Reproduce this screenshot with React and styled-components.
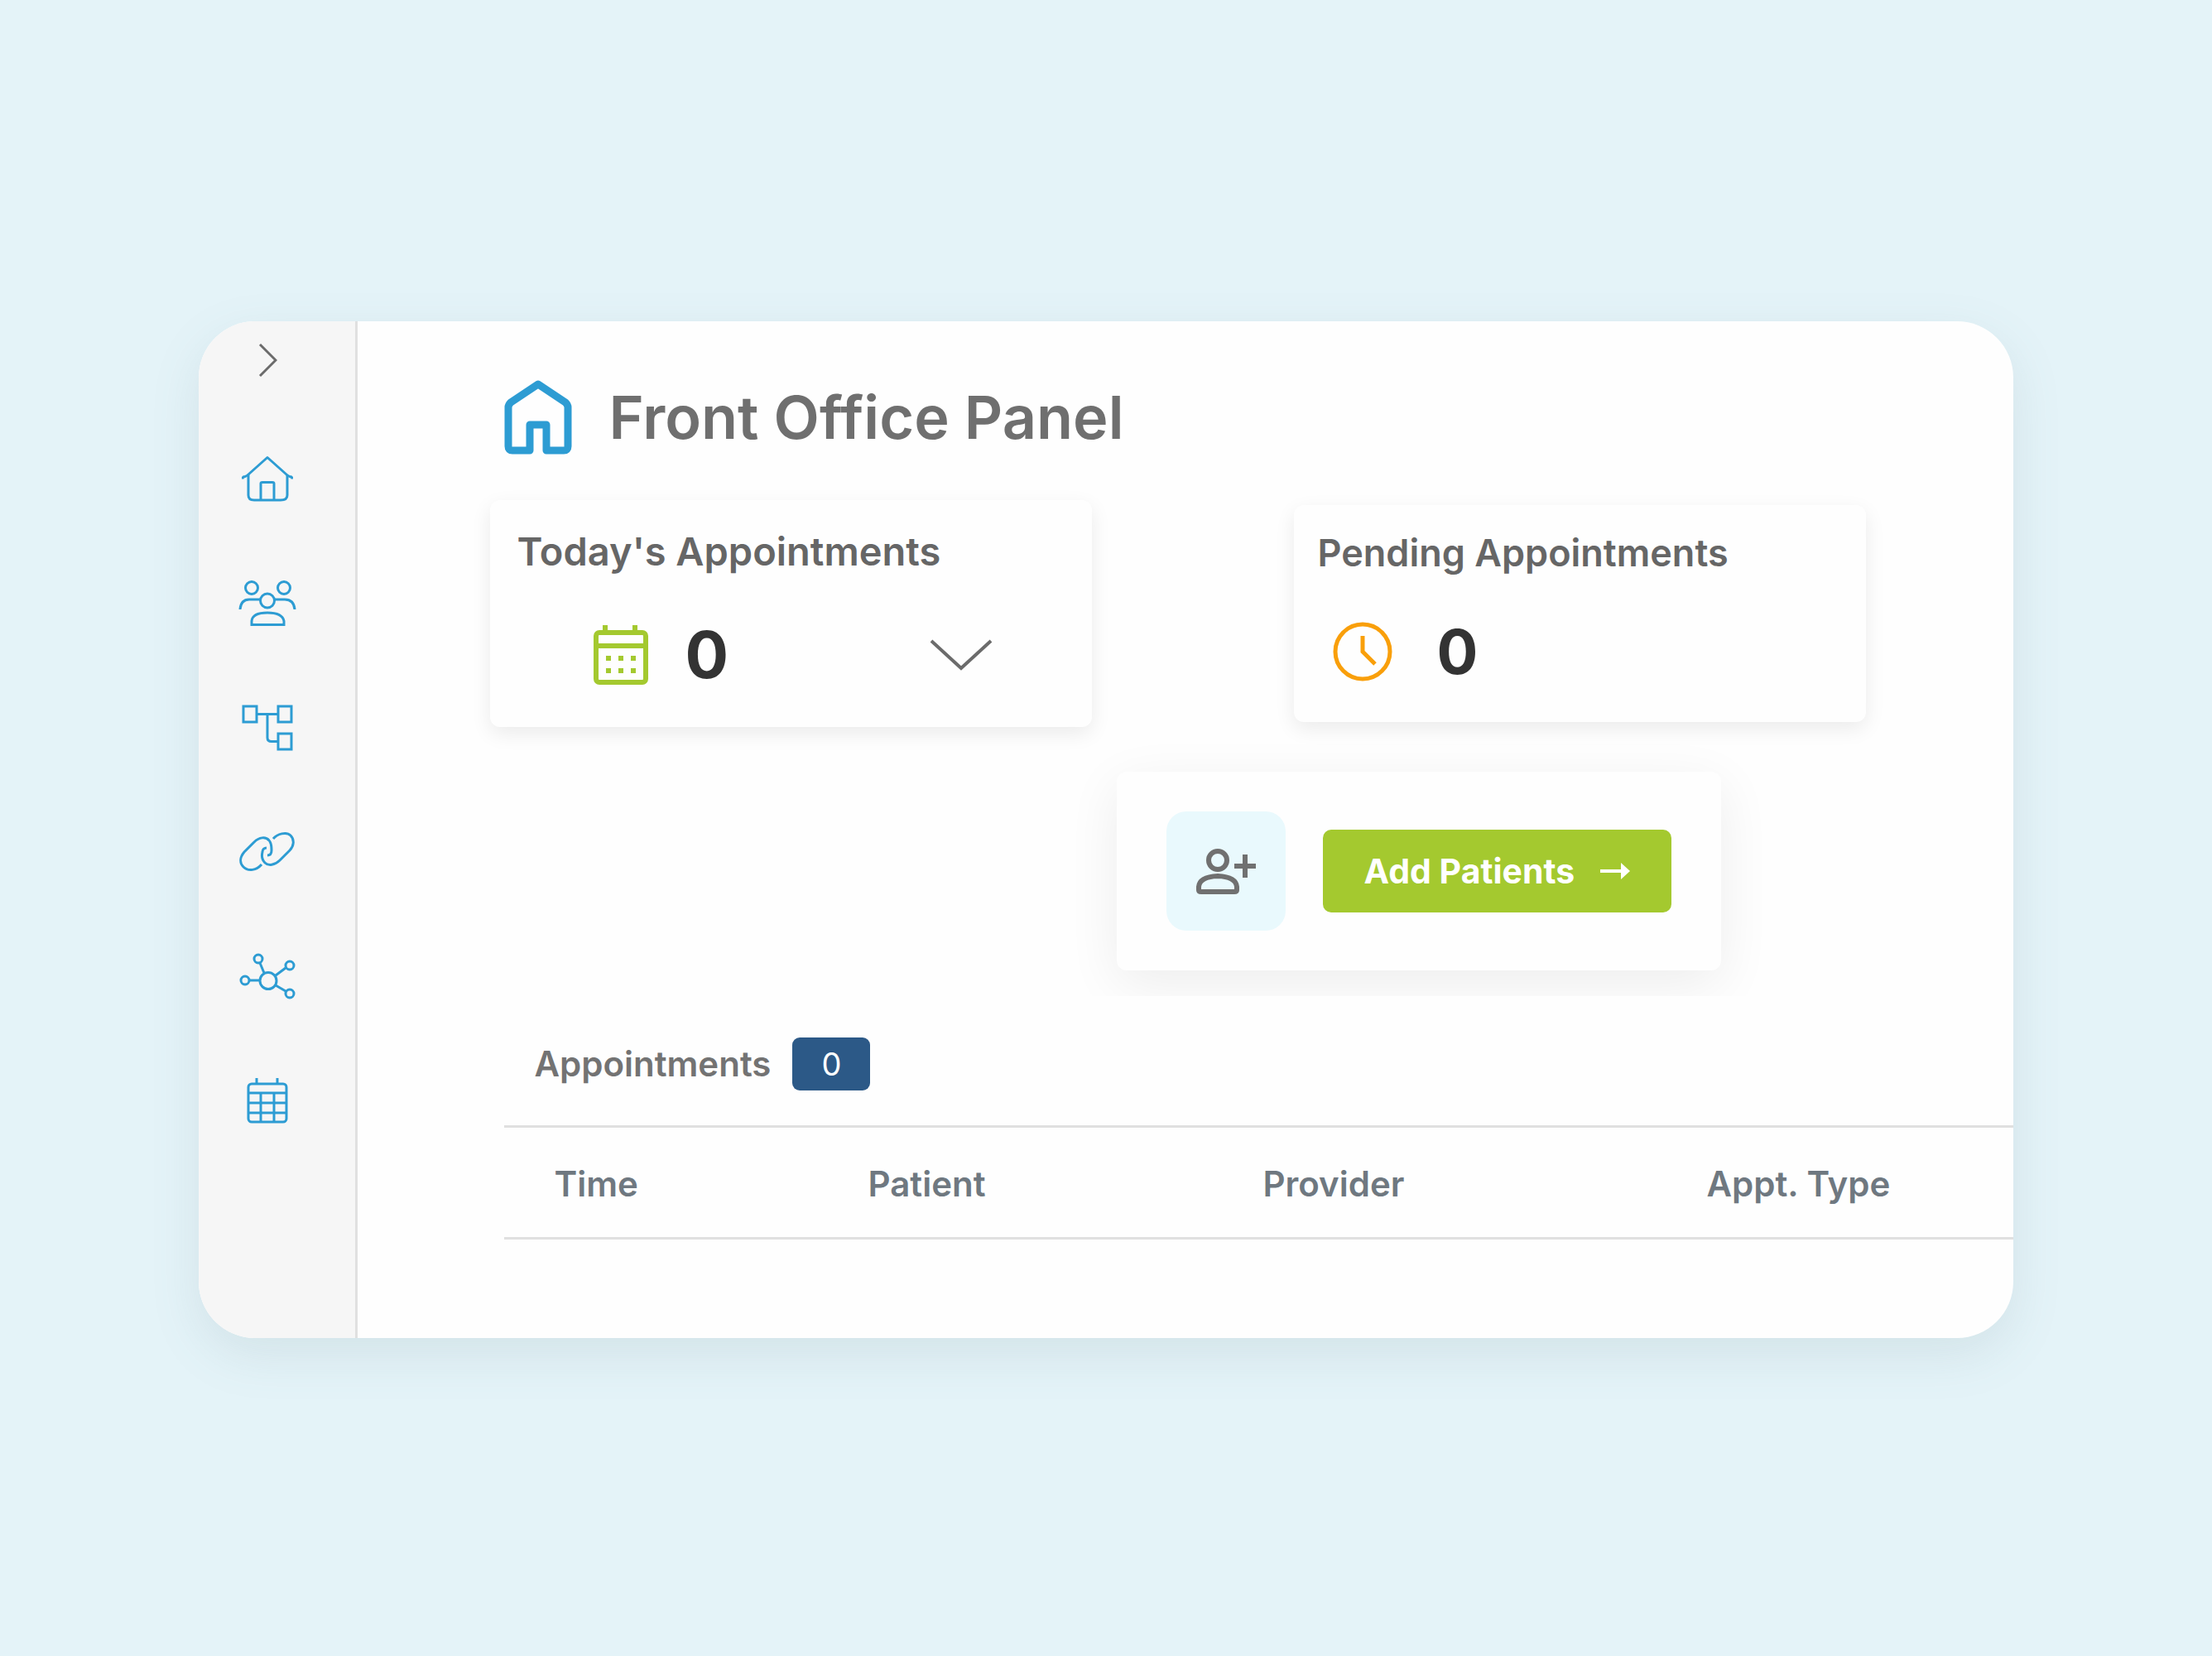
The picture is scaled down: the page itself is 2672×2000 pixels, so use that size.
import React from "react";
import styled, { createGlobalStyle } from "styled-components";

const GlobalStyle = createGlobalStyle`
    * {
        box-sizing: border-box;
    }

    body {
        margin: 0;
        background-color: #e4f3f8;
        font-family: Inter, "Liberation Sans", sans-serif;
    }
`;

const Page = styled.div`
    min-height: 100vh;
    padding: 4px 9% 0;
    display: flex;
    align-items: center;
`;

const Panel = styled.div`
    flex: 1;
    min-width: 0;
    display: flex;
    background-color: #fefefe;
    border-radius: 68px;
    overflow: hidden;
    box-shadow: 0 20px 60px rgba(90, 120, 130, 0.13);
`;

const Sidebar = styled.nav`
    flex: none;
    width: 192px;
    padding: 16px 24px 0 0;
    display: flex;
    flex-direction: column;
    align-items: center;
    background-color: #f6f6f6;
    border-right: 3px solid #e0e0e0;
`;

const ExpandBtn = styled.button`
    display: flex;
    margin-bottom: 84px;
    padding: 0;
    border: none;
    background: none;
    color: #6b6b6b;
    cursor: pointer;
`;

const NavLink = styled.a`
    display: flex;
    color: #2d9cd3;

    & + & {
        margin-top: 92px;
    }
`;

const Content = styled.main`
    flex: 1;
    min-width: 0;
    padding: 64px 0 119px 160px;
`;

const TitleRow = styled.header`
    display: flex;
    align-items: center;
    gap: 44px;
    padding-left: 17px;
    color: #2d9cd3;
`;

const Title = styled.h1`
    margin: 0;
    font-size: 72px;
    line-height: 104px;
    font-weight: 600;
    color: #6f6f6f;
`;

const Cards = styled.div`
    display: flex;
    align-items: center;
    justify-content: space-between;
    margin: 48px 178px 54px 0;
`;

const Card = styled.section`
    width: ${(props) => (props.$compact ? "691px" : "727px")};
    padding: ${(props) => (props.$compact ? "24px 29px 41px" : "28px 32px 43px")};
    border-radius: 12px;
    background-color: #fefefe;
    box-shadow: 0 8px 24px rgba(0, 0, 0, 0.08);
`;

const CardTitle = styled.h2`
    margin: 0;
    font-size: ${(props) => (props.$compact ? "45px" : "47px")};
    line-height: 68px;
    font-weight: 600;
    color: #666666;
`;

const CardBody = styled.div`
    display: flex;
    align-items: center;
    gap: ${(props) => (props.$compact ? "52px" : "41px")};
    margin-top: ${(props) => (props.$compact ? "41px" : "47px")};
    padding: ${(props) => (props.$compact ? "0 16px" : "0 88px 0 90px")};
    color: ${(props) => props.$color};
`;

const Count = styled.span`
    font-size: ${(props) => (props.$compact ? "74px" : "78px")};
    line-height: 88px;
    font-weight: 700;
    color: #333333;
`;

const ToggleBtn = styled.button`
    display: flex;
    margin-left: auto;
    padding: 0;
    border: none;
    background: none;
    color: #6b6b6b;
    cursor: pointer;
`;

const AddClip = styled.div`
    display: flex;
    justify-content: flex-end;
    margin-top: -40px;
    padding: 40px 353px 31px 0;
    overflow: hidden;
`;

const AddCard = styled.section`
    display: flex;
    align-items: center;
    gap: 45px;
    padding: 48px 60px;
    border-radius: 12px;
    background-color: #fefefe;
    box-shadow: 0 16px 64px rgba(0, 0, 0, 0.07);
`;

const AddIconBox = styled.div`
    display: flex;
    align-items: center;
    justify-content: center;
    width: 144px;
    height: 144px;
    border-radius: 24px;
    background-color: #e9f9fd;
    color: #707070;
`;

const AddBtn = styled.button`
    display: flex;
    align-items: center;
    justify-content: space-between;
    width: 421px;
    height: 100px;
    padding: 0 50px;
    border: none;
    border-radius: 10px;
    background-color: #a4c92f;
    color: #ffffff;
    font-family: inherit;
    font-size: 41px;
    font-weight: 700;
    cursor: pointer;
`;

const ListHeader = styled.div`
    display: flex;
    align-items: center;
    gap: 26px;
    margin: 50px 0 42px 53px;
`;

const ListTitle = styled.h2`
    margin: 0;
    font-size: 42px;
    line-height: 64px;
    font-weight: 600;
    color: #737373;
`;

const Badge = styled.span`
    width: 94px;
    border-radius: 9px;
    background-color: #2c5987;
    color: #ffffff;
    font-size: 38px;
    line-height: 64px;
    text-align: center;
`;

const TableWrap = styled.div`
    padding-left: 17px;
`;

const Table = styled.table`
    width: 100%;
    table-layout: fixed;
    border-collapse: collapse;
    border-top: 3px solid #e0e0e0;
    border-bottom: 3px solid #e0e0e0;
`;

const HeadCell = styled.th`
    width: ${(props) => props.$width};
    padding: 4px 0 0 60px;
    text-align: left;
    font-size: 42px;
    line-height: 128px;
    font-weight: 600;
    color: #6f7880;
`;

const HomeIcon = () => (
    <svg width="62" height="58" viewBox="0 0 62 58" fill="none" stroke="currentColor" strokeWidth="3" strokeLinejoin="round">
        <path d="M1 28.500Q1 25.500 4 25.500Q6 25 8 23L31 2.500L54 23Q56 25 58 25.500Q61 25.500 61 28.500" />
        <path d="M8 23V48Q8 54 15 54H47Q55 54 55 48V23" />
        <path d="M23 54V34Q23 32.500 25 32.500H37Q39 32.500 39 34V54" />
    </svg>
);

const PeopleIcon = () => (
    <svg width="70" height="58" viewBox="0 0 70 58" fill="none" stroke="currentColor" strokeWidth="3">
        <circle cx="16" cy="10" r="7.500" />
        <circle cx="55" cy="10" r="7.500" />
        <circle cx="35" cy="25.500" r="8.500" />
        <path d="M2 36Q3 24 13 24H26M44 24H56Q67 24 68 36" />
        <path d="M16 54.500V50Q17 40 35 40Q53 40 55 50V54.500Z" />
    </svg>
);

const FlowIcon = () => (
    <svg width="62" height="58" viewBox="0 0 62 58" fill="none" stroke="currentColor" strokeWidth="3">
        <rect x="2" y="3" width="16" height="19" />
        <rect x="44" y="3" width="16" height="19" />
        <rect x="44" y="36" width="16" height="19" />
        <path d="M18 12.500H44M31 12.500V41Q31 45.500 36 45.500H44" />
    </svg>
);

const LinkIcon = () => (
    <svg width="68" height="58" viewBox="0 0 68 58" fill="none" stroke="currentColor" strokeWidth="3">
        <path d="M41 13C46 7 57 4 62 9C67 14 66 22 61 27L49 39C43 45 35 46 31 42C27 38 27 33 28 29C28 26 30 24 33 24" />
        <path d="M27 44C21 51 11 53 5 47C0 42 1 35 6 29L18 17C24 11 32 10 36 15C39 18 39 24 39 27C39 31 37 33 34 33" />
    </svg>
);

const NetworkIcon = () => (
    <svg width="70" height="58" viewBox="0 0 70 58" fill="none" stroke="currentColor" strokeWidth="3">
        <circle cx="36" cy="34.500" r="10" />
        <circle cx="24" cy="8" r="5" />
        <circle cx="62" cy="16" r="5" />
        <circle cx="62" cy="50" r="5" />
        <circle cx="8" cy="34" r="5" />
        <path d="M26 13L31 25M57 19L45 28M57 47L45 40M13 34H26" />
    </svg>
);

const CalendarIcon = () => (
    <svg width="50" height="58" viewBox="0 0 50 58" fill="none" stroke="currentColor" strokeWidth="3">
        <rect x="2" y="9" width="46" height="46" rx="4" />
        <path d="M12 2V9M37 2V9M2 20H48M2 32H48M2 44H48M17 20V55M33 20V55" />
    </svg>
);

const NAV_ITEMS = [
    { label: "Home", Icon: HomeIcon },
    { label: "Patients", Icon: PeopleIcon },
    { label: "Workflow", Icon: FlowIcon },
    { label: "Links", Icon: LinkIcon },
    { label: "Network", Icon: NetworkIcon },
    { label: "Calendar", Icon: CalendarIcon },
];

const COLUMNS = [
    { label: "Time", width: "379px" },
    { label: "Patient", width: "477px" },
    { label: "Provider", width: "536px" },
    { label: "Appt. Type", width: "auto" },
];

const App = () => {
    return (
        <Page>
            <GlobalStyle />
            <Panel>
                <Sidebar>
                    <ExpandBtn aria-label="Expand menu">
                        <svg width="24" height="62" viewBox="0 0 24 62" fill="none" stroke="currentColor" strokeWidth="3">
                            <path d="M3 12L22 31L3 50" />
                        </svg>
                    </ExpandBtn>
                    {NAV_ITEMS.map(({ label, Icon }) => (
                        <NavLink key={label} href="#" aria-label={label}>
                            <Icon />
                        </NavLink>
                    ))}
                </Sidebar>

                <Content>
                    <TitleRow>
                        <svg width="82" height="92" viewBox="0 0 82 92" fill="none" stroke="currentColor" strokeWidth="9" strokeLinejoin="round">
                            <path d="M5 34Q5 31 8 28L41 6L74 28Q77 31 77 34V81Q77 86 72 86H51V55H31V86H10Q5 86 5 81Z" />
                        </svg>
                        <Title>Front Office Panel</Title>
                    </TitleRow>

                    <Cards>
                        <Card>
                            <CardTitle>Today's Appointments</CardTitle>
                            <CardBody $color="#a4c92f">
                                <svg width="72" height="76" viewBox="0 0 72 76" fill="none" stroke="currentColor" strokeWidth="6">
                                    <rect x="6" y="11" width="60" height="60" rx="4" />
                                    <path d="M17 2V11M53 2V11M6 27H66" />
                                    <path d="M18 42H24M33 42H39M48 42H54M18 57H24M33 57H39M48 57H54" />
                                </svg>
                                <Count>0</Count>
                                <ToggleBtn aria-label="Show appointments">
                                    <svg width="76" height="42" viewBox="0 0 76 42" fill="none" stroke="currentColor" strokeWidth="4">
                                        <path d="M2 4L38 37L74 4" />
                                    </svg>
                                </ToggleBtn>
                            </CardBody>
                        </Card>

                        <Card $compact>
                            <CardTitle $compact>Pending Appointments</CardTitle>
                            <CardBody $compact $color="#f99f0a">
                                <svg width="76" height="76" viewBox="0 0 76 76" fill="none" stroke="currentColor" strokeWidth="5">
                                    <circle cx="38" cy="38" r="33" />
                                    <path d="M38 19V38L53 53" />
                                </svg>
                                <Count $compact>0</Count>
                            </CardBody>
                        </Card>
                    </Cards>

                    <AddClip>
                        <AddCard>
                            <AddIconBox>
                                <svg width="76" height="60" viewBox="0 0 76 60" fill="none" stroke="currentColor" strokeWidth="6">
                                    <circle cx="28" cy="17" r="11" />
                                    <path d="M5 49Q6 37 28 36Q50 37 51 49V53Q51 55 48 55H8Q5 55 5 53Z" />
                                    <path d="M61 10V38M48 24H74" />
                                </svg>
                            </AddIconBox>
                            <AddBtn>
                                Add Patients
                                <svg width="36" height="24" viewBox="0 0 36 24" fill="none" stroke="currentColor" strokeWidth="4">
                                    <path d="M0 12H28" />
                                    <path d="M25 2L36 12L25 22Z" fill="currentColor" stroke="none" />
                                </svg>
                            </AddBtn>
                        </AddCard>
                    </AddClip>

                    <ListHeader>
                        <ListTitle>Appointments</ListTitle>
                        <Badge>0</Badge>
                    </ListHeader>

                    <TableWrap>
                        <Table>
                            <thead>
                                <tr>
                                    {COLUMNS.map((column) => (
                                        <HeadCell key={column.label} $width={column.width}>
                                            {column.label}
                                        </HeadCell>
                                    ))}
                                </tr>
                            </thead>
                        </Table>
                    </TableWrap>
                </Content>
            </Panel>
        </Page>
    );
};

export default App;
